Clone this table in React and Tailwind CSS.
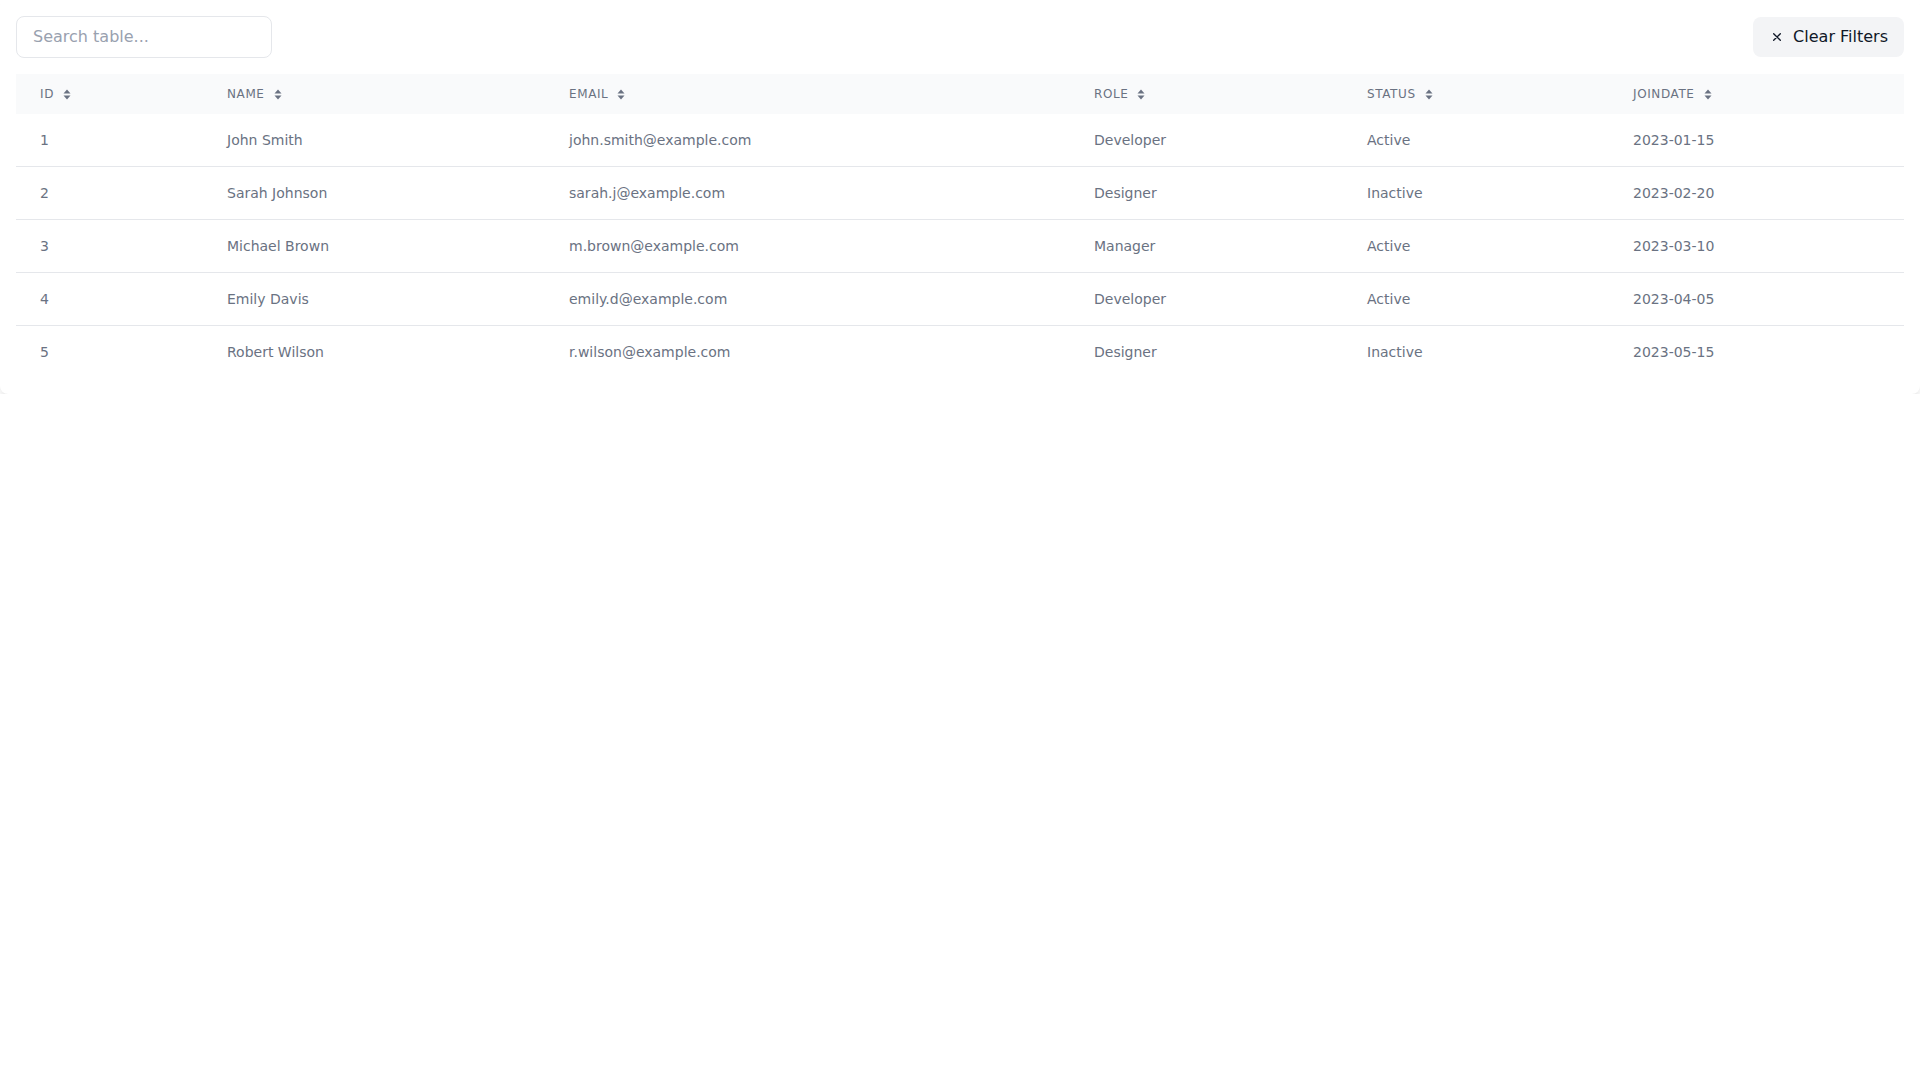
import React from "react";

const rows = [
  [1, "John Smith", "john.smith@example.com", "Developer", "Active", "2023-01-15"],
  [2, "Sarah Johnson", "sarah.j@example.com", "Designer", "Inactive", "2023-02-20"],
  [3, "Michael Brown", "m.brown@example.com", "Manager", "Active", "2023-03-10"],
  [4, "Emily Davis", "emily.d@example.com", "Developer", "Active", "2023-04-05"],
  [5, "Robert Wilson", "r.wilson@example.com", "Designer", "Inactive", "2023-05-15"],
];

const cols = [
  { label: "ID", w: "w-[187px]" },
  { label: "NAME", w: "w-[342px]" },
  { label: "EMAIL", w: "w-[525px]" },
  { label: "ROLE", w: "w-[273px]" },
  { label: "STATUS", w: "w-[266px]" },
  { label: "JOINDATE", w: "w-[295px]" },
];

function SortIcon() {
  return (
    <svg width="8" height="11" viewBox="0 0 8 11" className="ml-[9px] inline-block text-gray-500" fill="currentColor">
      <path d="M4 0.5 L7.5 4.5 H0.5 Z" />
      <path d="M4 10.5 L7.5 6.5 H0.5 Z" />
    </svg>
  );
}

export default function App() {
  return (
    <div className="bg-white" style={{ fontFamily: '"DejaVu Sans", sans-serif' }}>
      <div className="bg-white rounded-lg shadow-lg p-4">
        <div className="flex items-center justify-between mb-4">
          <input
            type="text"
            placeholder="Search table..."
            className="w-64 px-4 py-2 border border-gray-200 rounded-lg text-base text-gray-700 placeholder-gray-400 outline-none"
          />
          <button className="flex items-center gap-2 px-4 py-2 bg-gray-100 rounded-lg text-base text-gray-900">
            <svg width="16" height="16" viewBox="0 0 24 24" fill="none" stroke="currentColor" strokeWidth="2" strokeLinecap="round">
              <path d="M17 7 L7 17 M7 7 L17 17" />
            </svg>
            Clear Filters
          </button>
        </div>
        <table className="w-full table-fixed border-collapse">
          <thead className="bg-gray-50">
            <tr>
              {cols.map((c) => (
                <th
                  key={c.label}
                  className={`${c.w} px-6 py-3 text-left text-xs font-medium text-gray-500 uppercase tracking-wider`}
                >
                  <span className="inline-flex items-center">
                    {c.label}
                    <SortIcon />
                  </span>
                </th>
              ))}
            </tr>
          </thead>
          <tbody>
            {rows.map((r, i) => (
              <tr key={r[0]} className={i < rows.length - 1 ? "border-b border-gray-200" : ""}>
                {r.map((v, j) => (
                  <td key={j} className="px-6 py-4 text-sm text-gray-500 whitespace-nowrap">
                    {v}
                  </td>
                ))}
              </tr>
            ))}
          </tbody>
        </table>
      </div>
    </div>
  );
}
